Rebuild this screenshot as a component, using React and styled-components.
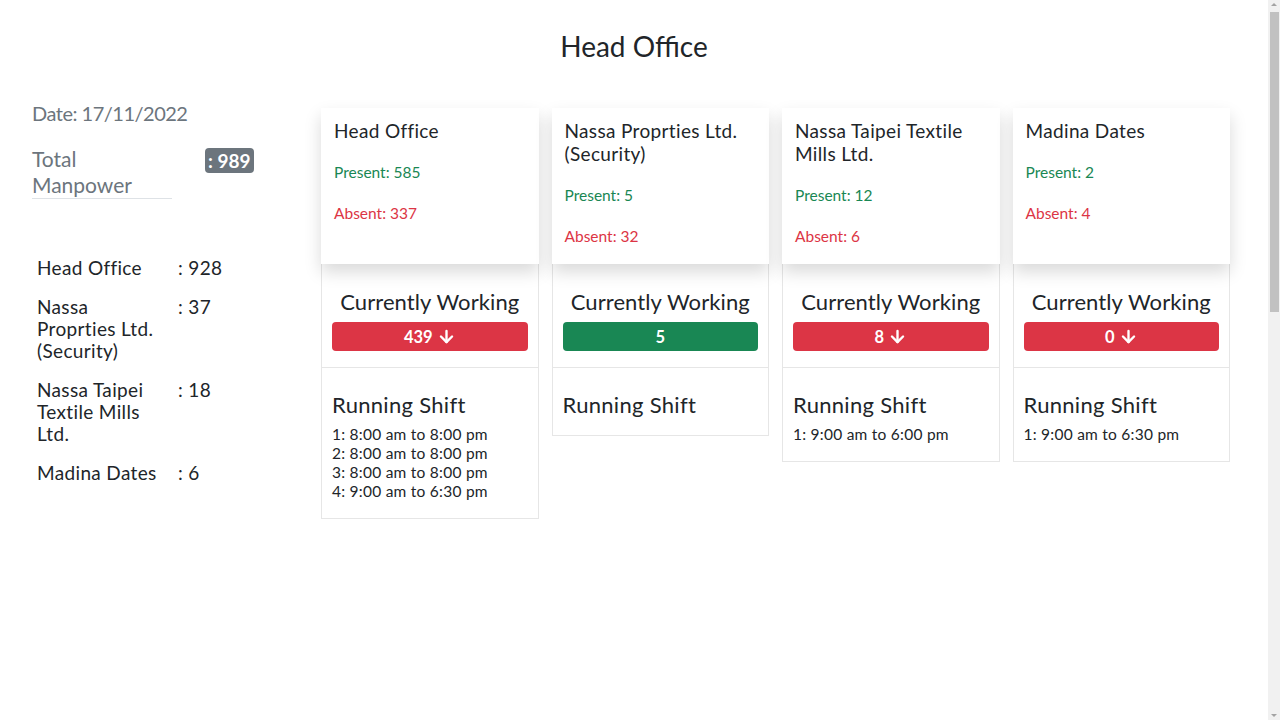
import React from "react";
import styled, { createGlobalStyle } from "styled-components";
import { ArrowDown } from "lucide-react";

const Global = createGlobalStyle`
  html, body { margin: 0; padding: 0; background: #fff; }
  body { font-family: Lato, "Open Sans", sans-serif; color: #212529; }
`;

const Page = styled.div`
  width: 1268px;
  min-height: 1630px;
  box-sizing: border-box;
  padding-top: 29px;
`;

const ScrollTrack = styled.div`
  position: fixed;
  top: 0;
  right: 0;
  width: 12px;
  height: 100vh;
  background: #f1f1f1;
  z-index: 10;
`;

const ScrollThumb = styled.div`
  position: absolute;
  left: 2px;
  right: 1px;
  top: 12px;
  height: 300px;
  background: #c1c1c1;
`;

const ScrollArrow = styled.div`
  position: absolute;
  left: 3px;
  width: 0;
  height: 0;
  border-left: 3px solid transparent;
  border-right: 3px solid transparent;
  ${(p) =>
    p.$down
      ? "bottom: 3px; border-top: 3px solid #a3a3a3;"
      : "top: 3px; border-bottom: 3px solid #a3a3a3;"}
`;

const Title = styled.h1`
  margin: 0 0 37px;
  text-align: center;
  font-size: 28px;
  line-height: 34px;
  font-weight: 400;
  color: #212529;
`;

const Main = styled.div`
  display: flex;
  align-items: flex-start;
`;

const Side = styled.aside`
  box-sizing: border-box;
  width: 321px;
  padding-left: 32px;
  flex-shrink: 0;
`;

const DateLine = styled.div`
  font-size: 20px;
  line-height: 26px;
  letter-spacing: -0.5px;
  color: #6c757d;
`;

const TotalRow = styled.div`
  display: flex;
  align-items: flex-start;
  margin-top: 20px;
`;

const TotalLabel = styled.div`
  width: 140px;
  font-size: 21px;
  line-height: 26px;
  color: #6c757d;
  border-bottom: 1px solid #dee2e6;
`;

const Badge = styled.span`
  margin-left: 33px;
  margin-top: 2px;
  display: inline-block;
  background: #6c757d;
  color: #fff;
  font-weight: 700;
  font-size: 19px;
  line-height: 25px;
  padding: 0 3px;
  border-radius: 4px;
`;

const Table = styled.table`
  margin-top: 50px;
  border-collapse: collapse;
  font-size: 19px;
  line-height: 22px;
  letter-spacing: 0.35px;
  color: #212529;
`;

const Cell = styled.td`
  padding: 8px 5px 9px;
  vertical-align: top;
  width: ${(p) => (p.$label ? "131px" : "auto")};
`;

const Grid = styled.div`
  margin-top: 8px;
  width: 909px;
  display: grid;
  grid-template-columns: repeat(4, 1fr);
  grid-template-rows: auto auto;
  column-gap: 13px;
  grid-auto-flow: column;
`;

const TopCard = styled.div`
  box-sizing: border-box;
  background: #fff;
  padding: 11px 13px 13px;
  box-shadow: 0 0.5rem 1rem rgba(0, 0, 0, 0.15);
  position: relative;
  z-index: 1;
`;

const CardTitle = styled.div`
  font-size: 19px;
  line-height: 23px;
  letter-spacing: 0.35px;
  margin-bottom: 21px;
  color: #212529;
`;

const Stat = styled.p`
  margin: 0 0 ${(p) => (p.$last ? "6px" : "23px")};
  font-size: 15.5px;
  line-height: 18px;
  color: ${(p) => (p.$tone === "green" ? "#198754" : "#dc3545")};
`;

const Lower = styled.div`
  align-self: start;
  border: 1px solid #e6e6e6;
  border-top: none;
  background: #fff;
`;

const WorkSection = styled.div`
  padding: 24px 10px 16px;
  border-bottom: 1px solid #e6e6e6;
  text-align: center;
`;

const SectionHead = styled.div`
  font-size: 22px;
  line-height: 27px;
  letter-spacing: ${(p) => (p.$align === "left" ? "0.3px" : "0.1px")};
  color: #212529;
  text-align: ${(p) => p.$align || "center"};
`;

const Bar = styled.div`
  margin-top: 7px;
  height: 29px;
  border-radius: 4px;
  background: ${(p) => (p.$tone === "green" ? "#198754" : "#dc3545")};
  color: #fff;
  font-weight: 700;
  font-size: 16.5px;
  display: flex;
  align-items: center;
  justify-content: center;
  gap: 4px;
`;

const ShiftSection = styled.div`
  padding: 23px 10px 17px;
`;

const ShiftList = styled.div`
  margin-top: 7px;
  font-size: 15.5px;
  line-height: 19px;
  letter-spacing: 0.25px;
  color: #212529;
`;

const sites = [
  {
    name: "Head Office",
    present: 585,
    absent: 337,
    working: 439,
    down: true,
    shifts: [
      "1: 8:00 am to 8:00 pm",
      "2: 8:00 am to 8:00 pm",
      "3: 8:00 am to 8:00 pm",
      "4: 9:00 am to 6:30 pm",
    ],
  },
  {
    name: "Nassa Proprties Ltd. (Security)",
    present: 5,
    absent: 32,
    working: 5,
    down: false,
    shifts: [],
  },
  {
    name: "Nassa Taipei Textile Mills Ltd.",
    present: 12,
    absent: 6,
    working: 8,
    down: true,
    shifts: ["1: 9:00 am to 6:00 pm"],
  },
  {
    name: "Madina Dates",
    present: 2,
    absent: 4,
    working: 0,
    down: true,
    shifts: ["1: 9:00 am to 6:30 pm"],
  },
];

const totals = [
  ["Head Office", 928],
  ["Nassa Proprties Ltd. (Security)", 37],
  ["Nassa Taipei Textile Mills Ltd.", 18],
  ["Madina Dates", 6],
];

export default function App() {
  return (
    <Page>
      <Global />
      <ScrollTrack aria-hidden="true">
        <ScrollArrow />
        <ScrollThumb />
        <ScrollArrow $down />
      </ScrollTrack>
      <Title>Head Office</Title>
      <Main>
        <Side>
          <DateLine>Date: 17/11/2022</DateLine>
          <TotalRow>
            <TotalLabel>Total Manpower</TotalLabel>
            <Badge>: 989</Badge>
          </TotalRow>
          <Table>
            <tbody>
              {totals.map(([n, v]) => (
                <tr key={n}>
                  <Cell $label>{n}</Cell>
                  <Cell>: {v}</Cell>
                </tr>
              ))}
            </tbody>
          </Table>
        </Side>
        <Grid>
          {sites.map((s) => (
            <React.Fragment key={s.name}>
              <TopCard>
                <CardTitle>{s.name}</CardTitle>
                <Stat $tone="green">Present: {s.present}</Stat>
                <Stat $tone="red" $last>
                  Absent: {s.absent}
                </Stat>
              </TopCard>
              <Lower>
                <WorkSection>
                  <SectionHead>Currently Working</SectionHead>
                  <Bar $tone={s.down ? "red" : "green"}>
                    {s.working}
                    {s.down && <ArrowDown size={19} strokeWidth={3} />}
                  </Bar>
                </WorkSection>
                <ShiftSection>
                  <SectionHead $align="left">Running Shift</SectionHead>
                  {s.shifts.length > 0 && (
                    <ShiftList>
                      {s.shifts.map((sh) => (
                        <div key={sh}>{sh}</div>
                      ))}
                    </ShiftList>
                  )}
                </ShiftSection>
              </Lower>
            </React.Fragment>
          ))}
        </Grid>
      </Main>
    </Page>
  );
}
